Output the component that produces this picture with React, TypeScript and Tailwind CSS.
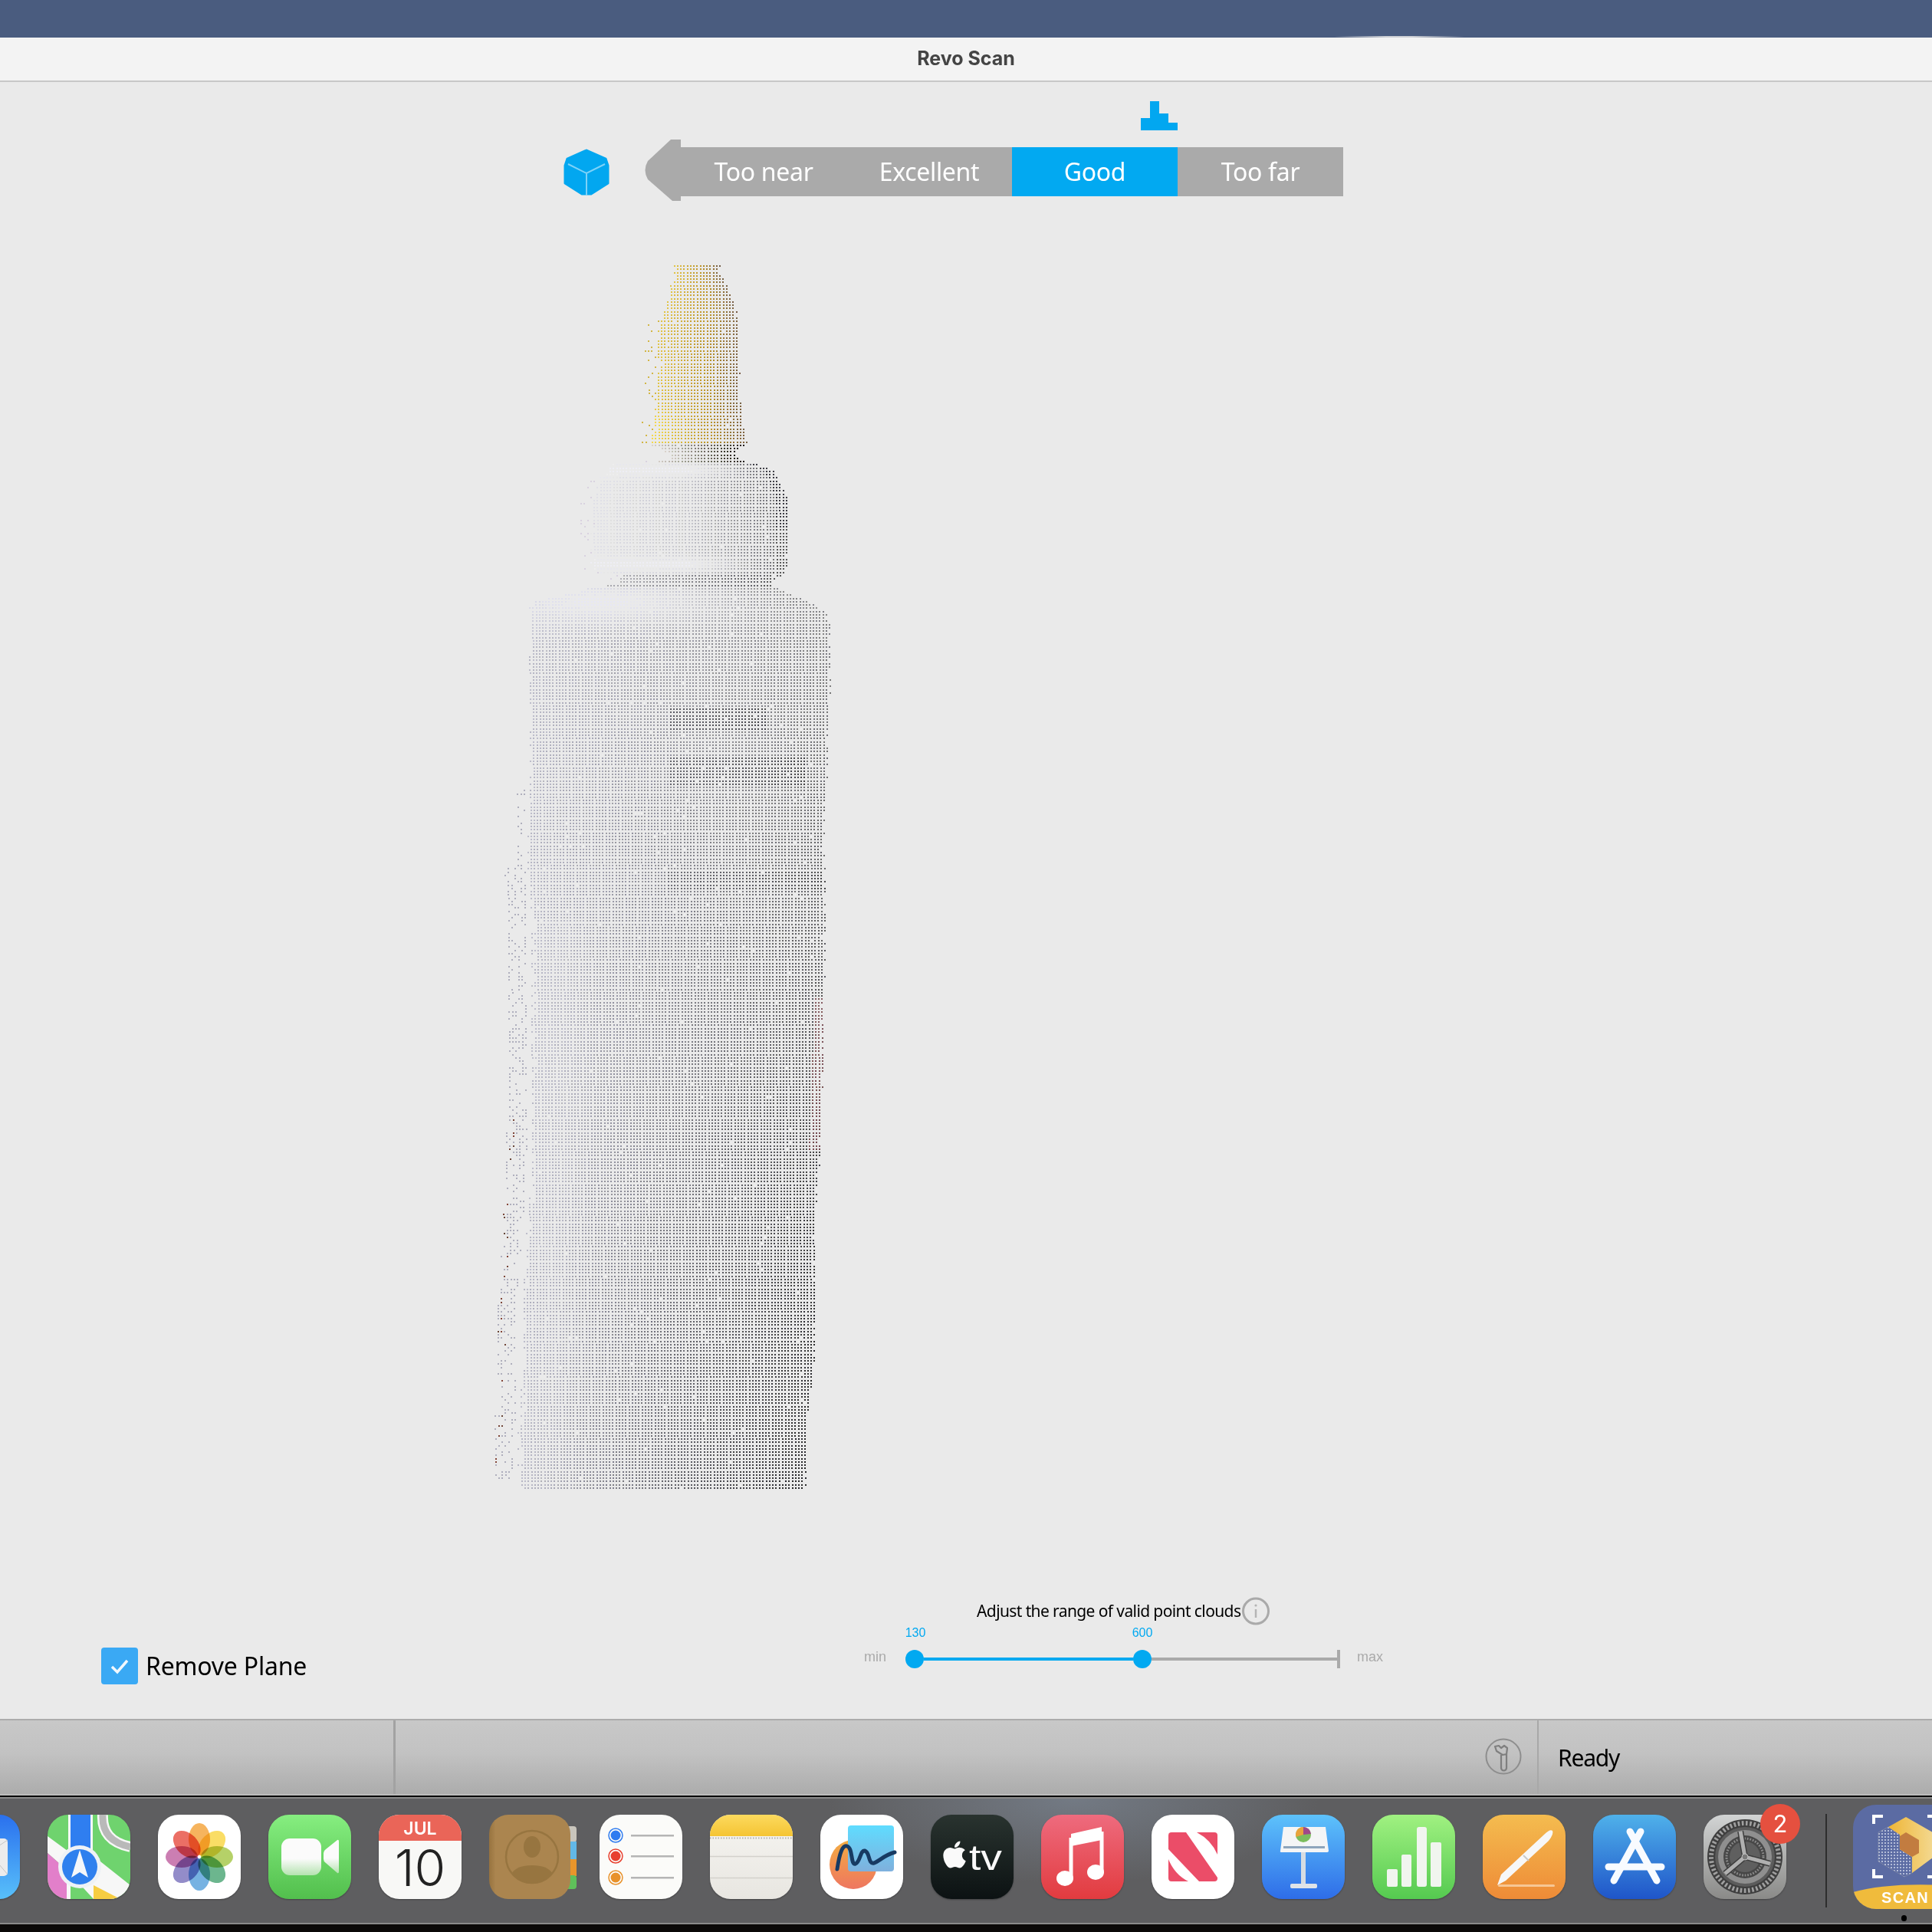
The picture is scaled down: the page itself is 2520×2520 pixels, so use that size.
import React from 'react';
import { FaApple } from 'react-icons/fa';

type Knot = [number, number, number];

// y, left edge, right edge of the scanned bottle
const capOutline: Knot[] = [
  [346, 875, 935], [360, 878, 940], [380, 870, 950], [400, 868, 955], [420, 856, 960],
  [450, 853, 960], [470, 858, 960], [520, 853, 963], [560, 850, 968], [578, 843, 972],
  [587, 865, 955], [600, 873, 963],
];
const collarOutline: Knot[] = [
  [604, 793, 985], [612, 790, 1005], [625, 777, 1013], [640, 775, 1020], [660, 770, 1025],
  [720, 770, 1025], [744, 768, 1022], [750, 810, 1013], [762, 800, 1003],
];
const bodyOutline: Knot[] = [
  [763, 773, 1005], [773, 743, 1023], [783, 697, 1050], [795, 687, 1072], [815, 690, 1080],
  [860, 688, 1080], [1000, 690, 1076], [1100, 685, 1071], [1170, 690, 1073], [1400, 690, 1070],
  [1500, 690, 1066], [1600, 685, 1060], [1700, 678, 1060], [1800, 678, 1058], [1850, 675, 1048],
  [1900, 672, 1051], [1943, 674, 1046],
];
const outline = [...capOutline, ...collarOutline, ...bodyOutline];

function edgesAt(y: number) {
  for (let i = 0; i < outline.length - 1; i++) {
    const a = outline[i];
    const b = outline[i + 1];
    if (y >= a[0] && y <= b[0]) {
      const f = (y - a[0]) / (b[0] - a[0] || 1);
      return [a[1] + (b[1] - a[1]) * f, a[2] + (b[2] - a[2]) * f];
    }
  }
  return null;
}

const mix = (a: number, b: number, f: number) => a + (b - a) * f;
const clamp = (v: number, lo = 0, hi = 1) => Math.min(hi, Math.max(lo, v));

function dotColor(x: number, y: number, t: number, noise: number): number[] {
  if (y < 578) {
    const bright = clamp((y - 525) / 25) * clamp((0.7 - t) / 0.3);
    if (t < 0.65) {
      const f = t / 0.65;
      return [mix(228 + bright * 20, 186, f), mix(198 + bright * 24, 146, f), mix(72 + bright * 8, 40, f)];
    }
    const f = (t - 0.65) / 0.35;
    return [mix(186, 124, f), mix(146, 98, f), mix(40, 66, f)];
  }
  if (y < 604) {
    const g = mix(215, 30, t);
    return [g + 4, g, g - 10];
  }
  if (y < 763) {
    let g = t < 0.5 ? mix(228, 198, t / 0.5) : mix(198, 105, (t - 0.5) / 0.5);
    const band = Math.exp(-(((y - 612) / 10) ** 2)) + Math.exp(-(((y - 735) / 9) ** 2));
    g = mix(g, 240, clamp(band) * clamp((0.85 - t) / 0.35));
    if (y >= 746) g = mix(175, 90, t);
    if (t > 0.95) g = y < 690 ? 62 : 88;
    return [g, g, g + 5];
  }
  const v = clamp((y - 780) / 1160);
  const right = 132 - 95 * v;
  let g = 190 + noise * 6 + (right - 190) * Math.pow(clamp(t), 0.85);
  if (t < 0.22 && y > 1200) g += 12 * (1 - Math.abs(t - 0.12) / 0.12);
  const glow = Math.exp(-(((x - 790) / 150) ** 2) - ((y - 785) / 30) ** 2);
  g = mix(g, 236, glow);
  if (x > 872 && x < 1000 && y > 923 && y < 950) g -= 55;
  if (x > 870 && x < 1050 && y > 985 && y < 1022) g -= 45;
  if (x > 870 && y > 1135 && y < 1160) g -= 25;
  g = clamp(g, 22, 240);
  const tint = (1 - t) * 12;
  if (t > 0.97 && y > 1300 && y < 1500) return [g + 40, g, g + 4];
  return [g - 2, g - 2, g + tint];
}

// everything is baked into a handful of paths, one for each rounded colour
function buildCloud() {
  let seed = 48213;
  const rand = () => {
    seed = (seed + 0x6d2b79f5) | 0;
    let m = Math.imul(seed ^ (seed >>> 15), 1 | seed);
    m = (m + Math.imul(m ^ (m >>> 7), 61 | m)) ^ m;
    return ((m ^ (m >>> 14)) >>> 0) / 4294967296;
  };
  const buckets = new Map<string, string[]>();
  const put = (x: number, y: number, c: number[]) => {
    const key = `rgb(${c.map((n) => clamp(Math.round(n / 7) * 7, 0, 255)).join(',')})`;
    if (!buckets.has(key)) buckets.set(key, []);
    buckets.get(key)!.push(`M${Math.round(x) - 640} ${Math.round(y) - 340}h2v2h-2z`);
  };
  for (let y = 346; y < 1944; y += 4.25) {
    const edges = edgesAt(y);
    if (!edges) continue;
    const [l, r] = edges;
    const shift = (y - 1000) * 0.006;
    for (let col = 0; col < 112; col++) {
      const x = 636 + col * 4.25 + shift;
      if (x > r + rand() * 4) continue;
      if (x < l + rand() * 5) {
        // loose points that float off the left side
        const reach = y > 1130 ? 30 : 14;
        if (y > 1030 && y < 1930 && x > l - reach && x < l - 4 && rand() < 0.36) {
          const brown = y > 1450 && x < l - 20 && rand() < 0.3;
          put(x, y, brown ? [96 + rand() * 40, 68, 58] : [178, 178, 190]);
        } else if (y > 400 && y < 578 && x > l - 14 && rand() < 0.16) {
          put(x, y, [212, 180, 70]);
        } else if (y < 760 && y > 600 && x > l - 14 && rand() < 0.1) {
          put(x, y, [215, 212, 222]);
        }
        continue;
      }
      if (rand() < 0.008) continue;
      const t = (x - l) / (r - l);
      if (y > 1200 && x - l < 8 && rand() < 0.4) continue;
      put(x, y, dotColor(x, y, t, rand() * 2 - 1));
    }
  }
  return [...buckets.entries()];
}

const cloud = buildCloud();

const PointCloud = () => (
  <svg width="460" height="1610" viewBox="0 0 460 1610" shapeRendering="crispEdges" className="mt-[78px] ml-[640px] shrink-0">
    {cloud.map(([color, parts]) => (
      <path key={color} d={parts.join('')} fill={color} />
    ))}
  </svg>
);

const CubeIcon = () => (
  <svg width="60" height="61" viewBox="0 0 60 61" className="mt-[12px] shrink-0">
    <path d="M30 2 L55 13 L58 22 V45 L36 59 H24 L2 45 V22 L5 13 Z" fill="#02a7f0" stroke="#02a7f0" strokeWidth="3" strokeLinejoin="round" />
    <path d="M6 20 L30 32 L54 20 M30 32 V61" fill="none" stroke="#7ed2f8" strokeWidth="2" />
  </svg>
);

const RangeCell = ({ label, active }: { label: string; active?: boolean }) => (
  <div className={`mt-[10px] flex h-16 w-[216px] items-center justify-center text-[32px] tracking-[-0.3px] text-white ${active ? 'bg-[#02a9f1]' : 'bg-[#aaaaaa]'}`}>
    {label}
  </div>
);

const DistanceBar = () => (
  <div className="mt-[12px] ml-[735px] flex h-20 items-start">
    <CubeIcon />
    <svg width="47" height="80" viewBox="0 0 47 80" className="ml-[46px] shrink-0">
      <path d="M47 0 V80 L36 80 L4 52 Q-3 40 4 28 L34 0 Z" fill="#aaaaaa" />
    </svg>
    <RangeCell label="Too near" />
    <RangeCell label="Excellent" />
    <RangeCell label="Good" active />
    <RangeCell label="Too far" />
  </div>
);

const RangeSlider = () => (
  <div className="ml-[725px] w-[678px] shrink-0">
    <div className="ml-[147px] flex h-[37px] items-center text-[21px] tracking-[-0.6px] text-black">
      <span className="w-[346px] whitespace-nowrap">Adjust the range of valid point clouds</span>
      <svg width="36" height="37" viewBox="0 0 36 37" className="shrink-0">
        <circle cx="18" cy="18.5" r="16.5" fill="none" stroke="#aaaaaa" strokeWidth="3" />
        <path d="M18 16 V27" stroke="#b4b4b4" strokeWidth="2.5" />
        <circle cx="18" cy="11" r="1.6" fill="#b4b4b4" />
      </svg>
    </div>
    <div className="mt-[2px] flex h-4 items-center pl-[47px] font-['Liberation_Sans',sans-serif] text-[16px] text-[#02a9f1]">
      <span className="w-10 text-center">130</span>
      <span className="ml-[256px] w-10 text-center">600</span>
    </div>
    <div className="mt-[14px] flex h-6 items-center font-['Liberation_Sans',sans-serif]">
      <span className="w-[54px] -translate-y-[3px] text-[18px] text-[#aaaaaa]">min</span>
      <div className="h-6 w-6 shrink-0 rounded-full bg-[#02a9f1]" />
      <div className="h-1 w-[273px] bg-[#02a9f1]" />
      <div className="h-6 w-6 shrink-0 rounded-full bg-[#02a9f1]" />
      <div className="h-1 w-[242px] bg-[#aaaaaa]" />
      <div className="h-6 w-1 bg-[#aaaaaa]" />
      <span className="ml-[22px] -translate-y-[3px] text-[18px] text-[#aaaaaa]">max</span>
    </div>
  </div>
);

const Tile = ({ children, className = '' }: { children: React.ReactNode; className?: string }) => (
  <div className={`h-[110px] w-[108px] shrink-0 overflow-hidden rounded-[27px] shadow-[0_1px_2px_rgba(0,0,0,0.3)] ${className}`}>
    <svg width="108" height="110" viewBox="0 0 108 110" className="block">
      {children}
    </svg>
  </div>
);

const MailIcon = () => (
  <Tile className="bg-[linear-gradient(180deg,#2a70ee,#58c0fa)]">
    <rect x="15" y="31" width="77" height="49" rx="5" fill="#ececec" />
    <path d="M15 33 L54 58 L92 33 M92 78 L70 52" stroke="#c4c4c4" strokeWidth="1" fill="none" />
  </Tile>
);

const MapsIcon = () => (
  <Tile className="bg-[#6fd36e]">
    <path d="M0 28 L30 50 L55 50 L108 92 L108 110 L60 110 L25 72 L0 50 Z" fill="#f7f7f7" />
    <path d="M0 50 L25 72 L25 110 L0 110 Z" fill="#e27fca" />
    <rect x="25" y="72" width="5" height="38" fill="#f7f7f7" />
    <path d="M60 92 L95 110 L60 110 Z" fill="#f6cd42" />
    <rect x="27" y="0" width="32" height="55" fill="#f7f7f7" />
    <rect x="30" y="0" width="26" height="55" fill="#2f7ef0" />
    <path d="M72 0 Q70 34 108 42" stroke="#f7f7f7" strokeWidth="14" fill="none" />
    <path d="M72 0 Q70 34 108 42" stroke="#b9b9b9" strokeWidth="9" fill="none" />
    <ellipse cx="42" cy="68" rx="28" ry="28" fill="#eef2f6" />
    <circle cx="42" cy="68" r="23" fill="#2f80ee" />
    <path d="M42 46 L53 82 L42 75 L31 82 Z" fill="#f5f7fa" />
  </Tile>
);

const petals = ['#f5a742', '#f9d74a', '#a8c94d', '#52a97a', '#5ea5dd', '#8078c0', '#c267a5', '#e8554a'];

const PhotosIcon = () => (
  <Tile className="bg-white">
    {petals.map((color, i) => (
      <ellipse
        key={color}
        cx="54"
        cy="32"
        rx="14"
        ry="21"
        fill={color}
        opacity="0.85"
        transform={`rotate(${i * 45} 54 55)`}
        style={{ mixBlendMode: 'multiply' }}
      />
    ))}
    <circle cx="54" cy="55" r="1.8" fill="#fff" />
  </Tile>
);

const FaceTimeIcon = () => (
  <Tile className="bg-[linear-gradient(180deg,#86ee80,#52bf4d)]">
    <defs>
      <linearGradient id="ftBody" x1="0" y1="0" x2="0" y2="1">
        <stop offset="0.55" stopColor="#fbfbfb" />
        <stop offset="1" stopColor="#b5e3b0" />
      </linearGradient>
    </defs>
    <rect x="17" y="31" width="52" height="48" rx="11" fill="url(#ftBody)" />
    <path d="M72 50 Q72 47 75 45 L90 33 Q92 32 92 35 V74 Q92 77 90 76 L75 63 Q72 61 72 58 Z" fill="url(#ftBody)" />
  </Tile>
);

const CalendarIcon = () => (
  <Tile className="bg-[#f8f8f6]">
    <rect width="108" height="34" fill="#ea6558" />
    <text x="54" y="26" textAnchor="middle" fill="#fff" fontSize="23" fontWeight="600" className="font-['Inter',sans-serif]">JUL</text>
    <text x="54" y="93" textAnchor="middle" fill="#222" fontSize="66" fontWeight="300" className="font-['Inter',sans-serif]">10</text>
  </Tile>
);

const ContactsIcon = () => (
  <div className="relative h-[110px] w-[108px] shrink-0">
    <svg width="114" height="110" viewBox="0 0 114 110" className="block">
      <defs>
        <linearGradient id="contactsEdge" x1="0" y1="0" x2="1" y2="0">
          <stop offset="0" stopColor="#97733f" />
          <stop offset="0.08" stopColor="#ab854f" />
        </linearGradient>
      </defs>
      <rect x="100" y="15" width="14" height="21" rx="4" fill="#c9c5bc" />
      <rect x="100" y="35" width="14" height="24" fill="#62b8e8" />
      <rect x="100" y="58" width="14" height="22" fill="#e9952b" />
      <rect x="100" y="79" width="14" height="18" rx="4" fill="#5fc05a" />
      <rect x="0" y="0" width="106" height="110" rx="25" fill="url(#contactsEdge)" />
      <ellipse cx="56" cy="55" rx="34" ry="34" fill="none" stroke="#977540" strokeWidth="2.5" />
      <ellipse cx="56" cy="42" rx="11" ry="14" fill="#977540" />
      <path d="M30 76 Q36 66 56 66 Q76 66 82 76 Q70 89 56 89 Q42 89 30 76 Z" fill="#977540" />
    </svg>
  </div>
);

const RemindersIcon = () => (
  <Tile className="bg-[#fbfbf9]">
    {([[27, '#2f7cf0'], [54, '#e8402f'], [82, '#e8912a']] as [number, string][]).map(([cy, color]) => (
      <g key={cy}>
        <circle cx="21" cy={cy} r="9" fill="none" stroke={color} strokeWidth="1.5" />
        <circle cx="21" cy={cy} r="6.5" fill={color} />
        <rect x="41" y={cy - 1} width="56" height="2.5" fill="#b5b5b5" />
      </g>
    ))}
  </Tile>
);

const NotesIcon = () => (
  <Tile className="bg-[linear-gradient(180deg,#f6f5f1,#e8e6e1)]">
    <defs>
      <linearGradient id="notesTop" x1="0" y1="0" x2="0" y2="1">
        <stop offset="0" stopColor="#fcda5e" />
        <stop offset="1" stopColor="#f5c433" />
      </linearGradient>
    </defs>
    <rect width="108" height="28" fill="url(#notesTop)" />
    <path d="M0 30.5 H108" stroke="#b3b1ac" strokeWidth="2" strokeDasharray="1.5 2" />
    <path d="M0 54.5 H108 M0 82.5 H108" stroke="#d3d1cc" strokeWidth="1.5" />
  </Tile>
);

const FreeformIcon = () => (
  <Tile className="bg-white">
    <defs>
      <linearGradient id="ffRound" x1="0" y1="0" x2="0" y2="1">
        <stop offset="0" stopColor="#f3ac42" />
        <stop offset="1" stopColor="#ee7660" />
      </linearGradient>
      <linearGradient id="ffSheet" x1="0" y1="0" x2="0" y2="1">
        <stop offset="0" stopColor="#5fdcff" />
        <stop offset="1" stopColor="#7fb0dd" />
      </linearGradient>
    </defs>
    <ellipse cx="43" cy="65" rx="31" ry="32" fill="url(#ffRound)" />
    <rect x="36" y="14" width="60" height="60" rx="4" fill="url(#ffSheet)" />
    <path d="M22 71 C25 50 29 39 35 41 C43 44 39 66 46 64 C52 62 52 46 58 47 C65 49 62 65 70 63 C77 61 82 53 97 49" fill="none" stroke="#173a63" strokeWidth="5" strokeLinecap="round" />
  </Tile>
);

const TvIcon = () => (
  <div className="relative h-[110px] w-[108px] shrink-0">
    <Tile className="bg-[linear-gradient(180deg,#29332f,#0c1213)]">
      <text x="50" y="72" fill="#fafafa" fontSize="46" fontWeight="400" textLength="43" lengthAdjust="spacingAndGlyphs" className="font-['Liberation_Sans',sans-serif]">tv</text>
    </Tile>
    <FaApple className="absolute top-[32px] left-[13px] h-[40px] w-[36px] text-[#fafafa]" />
  </div>
);

const MusicIcon = () => (
  <Tile className="bg-[linear-gradient(180deg,#ee6b7e,#e23b3f)]">
    <path d="M39 25 L79 16 V33 L39 41 Z" fill="#fff" />
    <path d="M39 30 V84 M79 22 V76" stroke="#fff" strokeWidth="5" fill="none" />
    <ellipse cx="31" cy="83" rx="11" ry="10" fill="#fff" />
    <ellipse cx="71" cy="75" rx="11" ry="10" fill="#fff" />
  </Tile>
);

const NewsIcon = () => (
  <Tile className="bg-white">
    <rect x="22" y="23" width="64" height="64" rx="4" fill="#eb4d68" />
    <path d="M45 23 L59 23 Q78 33 86 52 L86 82 Z" fill="#fff" />
    <path d="M22 45 L62 87 L48 87 Q30 78 22 58 Z" fill="#fff" />
  </Tile>
);

const KeynoteIcon = () => (
  <Tile className="bg-[linear-gradient(180deg,#5dc2fb,#2e6de8)]">
    <path d="M51 49 H57 V91 H51 Z" fill="#d6dce2" />
    <rect x="37" y="90" width="35" height="6" rx="2" fill="#dfe3e8" />
    <path d="M28 16 H83 L87 47 Q87 49 84 49 H26 Q23 49 24 47 Z" fill="#f4f5f6" />
    <rect x="28" y="41" width="54" height="3" fill="#8ea5bc" />
    <circle cx="54" cy="26" r="10" fill="#7cbd5d" />
    <path d="M54 26 V16 A10 10 0 0 0 44.5 29 Z" fill="#e9a33c" />
    <path d="M54 26 V16 A10 10 0 0 1 64 25 Z" fill="#a0488a" />
  </Tile>
);

const NumbersIcon = () => (
  <Tile className="bg-[linear-gradient(180deg,#a0f181,#55ca50)]">
    <rect x="19" y="71" width="14" height="23" rx="2" fill="#f1f5ef" />
    <rect x="38" y="52" width="13" height="42" rx="2" fill="#f1f5ef" />
    <rect x="58" y="16" width="13" height="78" rx="3" fill="#f1f5ef" />
    <rect x="76" y="36" width="14" height="58" rx="2" fill="#f1f5ef" />
  </Tile>
);

const PagesIcon = () => (
  <Tile className="bg-[linear-gradient(180deg,#f4bc4f,#ee8b37)]">
    <rect x="20" y="91" width="74" height="3" rx="1.5" fill="#f7c794" />
    <path d="M19 92 L24 78 L80 26 Q88 18 91 21 Q93 25 86 34 L30 86 Z" fill="#f7f7f7" />
    <path d="M53 53 L60 60" stroke="#c9c9c9" strokeWidth="2" />
  </Tile>
);

const AppStoreIcon = () => (
  <Tile className="bg-[linear-gradient(180deg,#4fb1ea,#1f55c9)]">
    <g stroke="#f8fbff" strokeWidth="9" strokeLinecap="round" fill="none">
      <path d="M62 22 L27 86" />
      <path d="M48 22 L83 86" />
      <path d="M20 68 H89" />
    </g>
  </Tile>
);

const spokes = [-10, 105, 230];

const SettingsIcon = () => (
  <div className="relative h-[110px] w-[108px] shrink-0">
    <Tile className="bg-[linear-gradient(180deg,#d2d4d4,#8a8a88)]">
      <circle cx="54" cy="55" r="49" fill="#3f3f3f" />
      <circle cx="54" cy="55" r="44" fill="none" stroke="#a0a0a0" strokeWidth="6" strokeDasharray="2.6 2.6" />
      <circle cx="54" cy="55" r="39" fill="#5c5c5c" />
      <circle cx="54" cy="55" r="35" fill="#8f8f8f" />
      <circle cx="54" cy="55" r="28" fill="#474747" />
      <circle cx="54" cy="55" r="24" fill="none" stroke="#8a8a8a" strokeWidth="3" strokeDasharray="1.8 1.8" />
      <circle cx="54" cy="55" r="20" fill="#5f5f5f" />
      {spokes.map((angle) => (
        <g key={angle} transform={`rotate(${angle} 54 55)`}>
          <path d="M54 55 V21" stroke="#3d3d3d" strokeWidth="8" />
          <path d="M54 55 V21" stroke="#b0b0b0" strokeWidth="5" />
        </g>
      ))}
      <circle cx="54" cy="55" r="4" fill="#7a7a7a" stroke="#c0c0c0" />
    </Tile>
    <div className="absolute top-[-14px] left-[74px] flex h-[52px] w-[52px] items-center justify-center rounded-full bg-[#e5503f] font-['Inter',sans-serif] text-[31px] text-white">
      2
    </div>
  </div>
);

const ScanIcon = () => (
  <div className="relative h-[136px] w-[136px] shrink-0 overflow-hidden rounded-[30px] bg-[#5b6ba3]">
    <svg width="136" height="136" viewBox="0 0 136 136" className="block">
      <defs>
        <linearGradient id="scanGold" x1="0" y1="0" x2="1" y2="0">
          <stop offset="0" stopColor="#efb535" />
          <stop offset="1" stopColor="#f3d88f" />
        </linearGradient>
        <pattern id="scanDots" width="4" height="4" patternUnits="userSpaceOnUse">
          <circle cx="2" cy="2" r="0.9" fill="#dfe5f2" />
        </pattern>
      </defs>
      <path d="M39 15 H27 V25 M27 84 V94 H39 M97 15 H109 M109 94 H97" fill="none" stroke="#fff" strokeWidth="4" />
      <path d="M46 29 L33 36 V74 L67 94 L77 89 V68 L61 58 V39 Z" fill="url(#scanDots)" stroke="#8e93a8" strokeWidth="0.6" />
      <path d="M69 16 L104 36 V69 L77 89 V68 L61 58 V39 L46 29 Z" fill="url(#scanGold)" />
      <path d="M69 36 L86 46 V63 L77 68 L61 58 V41 Z" fill="#c27c40" />
      <path d="M0 114 Q50 100 136 106 V136 H0 Z" fill="#f0bb3c" />
      <text x="37" y="128" fill="#fff" fontSize="20" fontWeight="700" letterSpacing="1.3" className="font-['Liberation_Sans',sans-serif]">SCAN</text>
    </svg>
  </div>
);

const ToolIcon = () => (
  <svg width="48" height="48" viewBox="0 0 48 48" className="shrink-0">
    <circle cx="24" cy="24" r="22.5" fill="none" stroke="#8e8e8e" strokeWidth="2" />
    <path d="M21 22 V39 a3.5 3.5 0 0 0 7 0 V21 L23 22 L15 17 L13 11 L18 10 L21 13 L25 10 L29 13 L28 21" fill="none" stroke="#7f7f7f" strokeWidth="2.2" strokeLinejoin="round" />
  </svg>
);

const StatusBar = () => (
  <div className="flex h-[100px] shrink-0 border-t-2 border-b-2 border-t-[#acacac] border-b-[#bcbcbc] bg-[linear-gradient(180deg,#c8c8c8,#c2c2c2_45%,#acacac)]">
    <div className="w-[516px] border-r-[3px] border-[#a2a2a2]" />
    <div className="flex flex-1 items-center justify-end pr-[20px] pb-[2px]">
      <ToolIcon />
    </div>
    <div className="flex w-[515px] items-center border-l-2 border-[#a8a8a8] pl-[25px] text-[30px] tracking-[-1.2px] text-black">
      Ready
    </div>
  </div>
);

const Dock = () => (
  <div className="relative h-[166px] shrink-0 overflow-hidden border-t-2 border-b-2 border-t-[#8b8b8b] border-b-[#8a8a8a] bg-[radial-gradient(ellipse_320px_110px_at_1400px_0px,#737a84,#5e5e60_100%)]">
    <div className="flex items-start">
      <div className="mt-[21px] ml-[-82px] flex shrink-0 gap-[36px]">
        <MailIcon />
        <MapsIcon />
        <PhotosIcon />
        <FaceTimeIcon />
        <CalendarIcon />
        <ContactsIcon />
        <RemindersIcon />
        <NotesIcon />
        <FreeformIcon />
        <TvIcon />
        <MusicIcon />
        <NewsIcon />
        <KeynoteIcon />
        <NumbersIcon />
        <PagesIcon />
        <AppStoreIcon />
        <SettingsIcon />
      </div>
      <div className="mt-[20px] ml-[51px] h-[122px] w-[2px] shrink-0 bg-[#2e2e2e]" />
      <div className="mt-[8px] ml-[34px] shrink-0">
        <ScanIcon />
        <div className="mt-[8px] ml-[63px] h-2 w-[7px] rounded-full bg-black" />
      </div>
    </div>
  </div>
);

export default function App() {
  return (
    <div className="flex h-[2520px] w-[2520px] flex-col overflow-hidden bg-[#0b0908] font-['Noto_Sans',sans-serif]">
      <div className="relative h-[49px] shrink-0 bg-[#4a5c7f]">
        <div className="absolute right-[610px] bottom-0 h-[2px] w-[170px] rounded-t-full bg-[linear-gradient(90deg,#4a5c7f,#cfd1d6_40%,#cfd1d6_60%,#4a5c7f)]" />
      </div>
      <div className="flex h-[58px] shrink-0 items-center justify-center border-b-2 border-[#c8c8c8] bg-[#f3f3f3] font-['Inter',sans-serif] text-[25px] font-bold text-[#444444]">
        Revo Scan
      </div>
      <div className="flex h-[2135px] shrink-0 flex-col bg-[#eaeaea]">
        <svg width="48" height="38" viewBox="0 0 48 38" className="mt-[25px] ml-[1488px] shrink-0">
          <path d="M12 0 H24 V16 H36 V28 H48 V38 H0 V22 H12 Z" fill="#02a7f0" />
        </svg>
        <DistanceBar />
        <PointCloud />
        <div className="mt-[133px] flex items-start">
          <div className="mt-[66px] ml-[132px] flex h-12 w-[270px] shrink-0 items-center">
            <div className="flex h-12 w-12 shrink-0 items-center justify-center rounded-[4px] bg-[#3aa9f4]">
              <svg width="48" height="48" viewBox="0 0 48 48">
                <path d="M14 25 L21 32 L34 17" fill="none" stroke="#f2f8fd" strokeWidth="3.5" />
              </svg>
            </div>
            <span className="ml-[10px] text-[32px] tracking-[-0.2px] whitespace-nowrap text-black">Remove Plane</span>
          </div>
          <RangeSlider />
        </div>
      </div>
      <StatusBar />
      <div className="h-[2px] shrink-0 bg-black" />
      <Dock />
    </div>
  );
}
